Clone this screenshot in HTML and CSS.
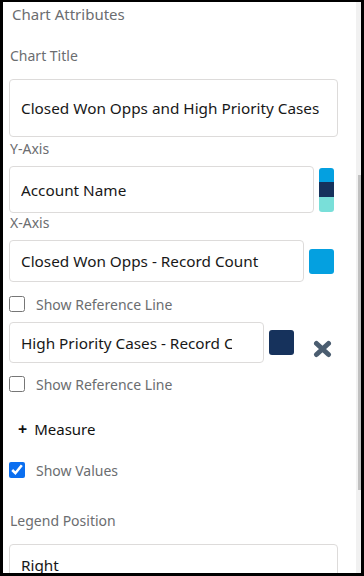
FILE: index.html
```html
<!DOCTYPE html>
<html lang="en">
<head>
    <meta charset="UTF-8">
    <meta name="viewport" content="width=device-width, initial-scale=1.0">
    <title>Chart Attributes</title>
    <link rel="stylesheet" href="styles.css">
</head>
<body>
    <div class="frame">
        <div class="panel">
            <h3 class="section-title">Chart Attributes</h3>

            <label class="field-label label-title">Chart Title</label>
            <input class="text-input input-title" type="text" value="Closed Won Opps and High Priority Cases">

            <label class="field-label label-y">Y-Axis</label>
            <div class="row row-y">
                <input class="text-input input-y" type="text" value="Account Name">
                <div class="swatch-stack">
                    <span class="band band-blue"></span>
                    <span class="band band-navy"></span>
                    <span class="band band-teal"></span>
                </div>
            </div>

            <label class="field-label label-x">X-Axis</label>
            <div class="row row-x">
                <input class="text-input input-x" type="text" value="Closed Won Opps - Record Count">
                <span class="swatch swatch-blue"></span>
            </div>

            <label class="check-row check-first">
                <input type="checkbox">
                <span>Show Reference Line</span>
            </label>

            <div class="row row-measure">
                <input class="text-input input-measure" type="text" value="High Priority Cases - Record Count">
                <span class="swatch swatch-navy"></span>
                <button class="remove-btn" title="Remove">
                    <svg width="19" height="18" viewBox="0 0 19 18">
                        <path d="M3.5 3.5 L15.5 14.5 M15.5 3.5 L3.5 14.5" stroke="#4b5d70" stroke-width="5" stroke-linecap="round" fill="none"/>
                    </svg>
                </button>
            </div>

            <label class="check-row check-second">
                <input type="checkbox">
                <span>Show Reference Line</span>
            </label>

            <button class="add-measure">
                <span class="plus">+</span>
                <span>Measure</span>
            </button>

            <label class="check-row check-values">
                <input type="checkbox" checked>
                <span>Show Values</span>
            </label>

            <label class="field-label label-legend">Legend Position</label>
            <input class="text-input input-legend" type="text" value="Right">
        </div>
        <div class="scrollbar">
            <div class="thumb"></div>
        </div>
    </div>
</body>
</html>
```

FILE: styles.css
```css
* {
    margin: 0;
    padding: 0;
    box-sizing: border-box;
    font-family: "Segoe UI", "Noto Sans", sans-serif;
}

body {
    background: #000;
    height: 576px;
    overflow: hidden;
}

.frame {
    display: flex;
    margin: 2px 3px 0 3px;
    height: 571px;
    background: #fff;
}

.panel {
    flex: 1;
    overflow: hidden;
    padding: 0 18px 0 6px;
    display: flex;
    flex-direction: column;
}

.panel > * {
    flex-shrink: 0;
}

.section-title {
    font-size: 15px;
    font-weight: normal;
    line-height: 20px;
    color: #6b6d70;
    padding-left: 3px;
    margin-top: 2px;
}

.field-label {
    display: block;
    font-size: 14px;
    line-height: 20px;
    color: #6b6d70;
    padding-left: 1px;
}

.label-title { margin-top: 22px; }
.label-y { margin-top: 2px; }
.label-x { margin-top: 0; }
.label-legend { margin-top: 31px; }

.text-input {
    display: block;
    width: 100%;
    border: 1px solid #dddbda;
    border-radius: 4px;
    padding: 0 11px;
    font-size: 15.3px;
    color: #181818;
    background: #fff;
    outline: none;
    min-width: 0;
}

.input-title { height: 58px; margin-top: 13px; }
.input-y { height: 47px; }
.input-x { height: 42px; }
.input-measure { height: 41px; padding-right: 31px; }
.input-legend { height: 42px; margin-top: 13px; }

.row {
    display: flex;
    align-items: center;
    gap: 5px;
}

.row .text-input {
    flex: 1;
}

.row-y { margin-top: 7px; margin-right: 4px; }
.row-x { margin-top: 7px; margin-right: 4px; }
.row-measure { margin-top: 8px; margin-right: 4px; }

.swatch-stack {
    display: flex;
    flex-direction: column;
    width: 15px;
    height: 44px;
    border-radius: 3px;
    overflow: hidden;
}

.band {
    flex: 1;
}

.band-blue { background: #04a0e0; }
.band-navy { background: #16325c; }
.band-teal { background: #79dfd9; }

.swatch {
    width: 25px;
    height: 25px;
    border-radius: 3px;
    flex: none;
}

.swatch-blue { background: #04a0e0; }
.swatch-navy { background: #16325c; }

.remove-btn {
    display: flex;
    border: none;
    background: none;
    margin: 12px 2px 0 14px;
    width: 19px;
    cursor: pointer;
}

.check-row {
    display: flex;
    align-items: center;
    gap: 11px;
    height: 20px;
    font-size: 14px;
    color: #6b6d70;
}

.check-row input {
    width: 16px;
    height: 16px;
    margin: 0;
    accent-color: #0b6ff0;
}

.check-first { margin-top: 12px; }
.check-second { margin-top: 11px; }
.check-values { margin-top: 21px; }

.add-measure {
    display: flex;
    align-items: center;
    gap: 7px;
    align-self: flex-start;
    margin: 25px 0 0 9px;
    height: 20px;
    border: none;
    background: none;
    font-size: 15px;
    color: #111;
    cursor: pointer;
}

.plus {
    font-size: 16px;
    font-weight: bold;
}

.scrollbar {
    width: 5px;
    background: #f1f1f1;
}

.thumb {
    margin: 173px 0 0 2px;
    height: 315px;
    background: #c1c1c1;
}
```
